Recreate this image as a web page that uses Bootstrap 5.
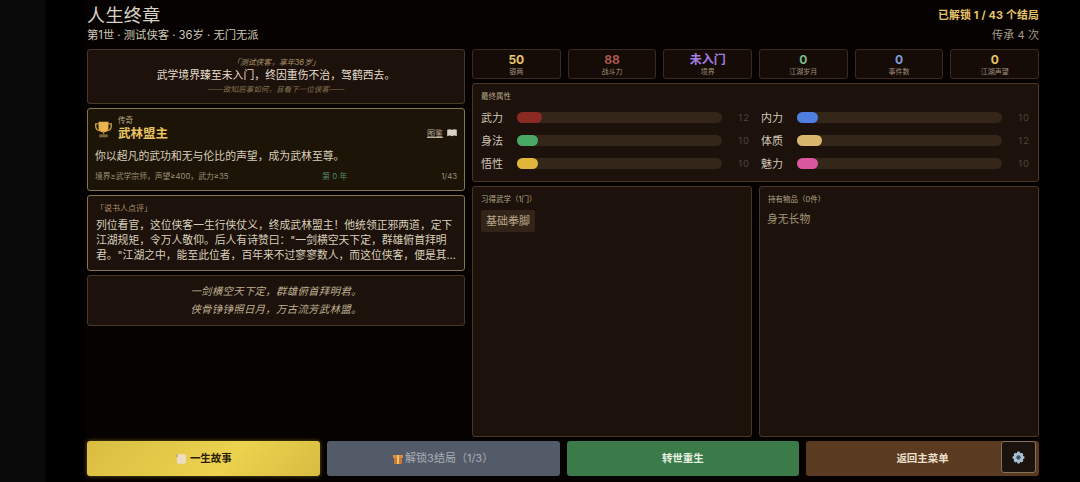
<!DOCTYPE html>
<html lang="zh-CN">
<head>
  <meta charset="UTF-8">
  <title>人生终章</title>
  <link href="https://cdn.jsdelivr.net/npm/bootstrap@5.3.3/dist/css/bootstrap.min.css" rel="stylesheet">
  <meta name="viewport" content="width=device-width, initial-scale=1">
<style>
  html, body { height: 482px; overflow: hidden; }
  body { background: #000; color: #e8dcc4; font-family: "Inter", "Noto Sans CJK SC", sans-serif; font-size: 11px; }
  .shell { height: 482px; background: linear-gradient(90deg, #0a0a0a 0, #0a0a0a 45px, #000 46px, #000 82px, #060201 87px, #060201 1038px, #000 1042px); padding: 0 41px 6px 87px; }
  .top-bar { height: 45px; }
  .page-title { font-size: 18px; line-height: 22px; font-weight: 400; color: #d8d2c6; margin: 5px 0 0; letter-spacing: .4px; }
  .page-sub { font-size: 11.3px; line-height: 16px; color: #cfc7b6; margin-top: 0; }
  .unlock-txt { font-size: 10.8px; line-height: 14px; font-weight: 700; color: #e8c56a; margin-top: 9px; letter-spacing: .2px; }
  .legacy-txt { font-size: 11px; line-height: 14px; color: #a59c8a; margin-top: 5px; letter-spacing: .1px; }
  .main-area { height: 388px; margin-top: 4px; gap: 7px; }
  .left-col { width: 378px; gap: 4px; }
  .right-col { width: 567px; gap: 4px; }
  .pane { background: #1c110b; border: 1px solid #4a3826; border-radius: 3px; }
  .death-pane { height: 55px; padding-top: 6px; text-align: center; }
  .death-top { font-size: 7.8px; line-height: 13px; font-style: italic; color: #a8926a; }
  .death-main { font-size: 10.8px; line-height: 14px; color: #e4dccb; letter-spacing: .05px; }
  .death-foot { font-size: 7.6px; line-height: 13px; font-style: italic; color: #85714f; }
  .ending-pane { height: 83px; background: #1d1408; border-color: #85754e; padding: 7px 7px 0; }
  .rank-txt { font-size: 7.5px; line-height: 10px; color: #b8a888; }
  .ending-name { font-size: 12.5px; line-height: 16px; font-weight: 700; color: #e8c560; letter-spacing: 0; }
  .atlas-link { font-size: 8px; color: #b9ae97; text-decoration: underline; margin-top: 7px; }
  .trophy-wrap { gap: 6px; }
  .ending-desc { font-size: 10.85px; line-height: 16px; color: #d8cfba; margin-top: 6px; }
  .ending-foot { font-size: 7.8px; line-height: 11px; color: #9c8f76; margin-top: 7px; }
  .year-txt { color: #4f8a62; }
  .review-pane { height: 76px; border-color: #85754e; padding: 6px 8px 0; }
  .review-head { font-size: 8px; line-height: 12px; color: #a8926a; }
  .review-body { font-size: 10.8px; line-height: 15px; color: #d8cfba; margin-top: 4px; height: 46px; overflow: hidden; }
  .poem-pane { height: 51px; text-align: center; font-style: italic; font-size: 10.5px; line-height: 18px; color: #bdae90; padding-top: 7px; letter-spacing: .2px; }
  .stat-row { gap: 7px; height: 30px; }
  .stat-box { flex: 1 1 0; background: #150c07; border: 1px solid #3a2b1e; border-radius: 3px; text-align: center; padding-top: 3px; }
  .stat-num { font-size: 12px; line-height: 14px; font-weight: 700; }
  .stat-lbl { font-size: 7px; line-height: 9px; color: #a09078; }
  .attr-pane { height: 99px; padding: 8px 8px 0; }
  .sec-label { font-size: 7.5px; line-height: 10px; color: #b5a789; }
  .attr-grid { margin-top: 8px; column-gap: 11px; display: grid; grid-template-columns: 1fr 1fr; row-gap: 7px; }
  .attr-item { height: 16px; }
  .attr-name { font-size: 11px; line-height: 16px; width: 36px; color: #cfc7b6; flex: none; }
  .attr-track { width: 205px; height: 11px; background: #35261a; border-radius: 6px; flex: none; }
  .attr-fill { height: 11px; border-radius: 6px; }
  .attr-val { font-size: 9.5px; width: 28px; text-align: right; color: #4e463c; letter-spacing: 1px; flex: none; }
  .lower-row { gap: 7px; height: 252px; }
  .skills-pane { width: 280px; padding: 8px 8px; }
  .items-pane { width: 280px; padding: 8px 8px; }
  .skill-chip { display: inline-block; font-size: 11px; line-height: 14px; color: #b8a888; background: #33241a; border-radius: 2px; padding: 4px 5px; margin-top: 5px; }
  .empty-txt { font-size: 10.8px; line-height: 15px; color: #a39679; margin-top: 7px; margin-left: -1px; }
  .action-row { gap: 7px; height: 35px; margin-top: 4px; }
  .act-btn { flex: 1 1 0; border: 0; border-radius: 3px; font-size: 10.5px; font-weight: 700; display: flex; align-items: center; justify-content: center; gap: 2px; padding: 0; }
  .act-gold { background: linear-gradient(135deg, #d9bd42, #ecd24e 60%, #d8bb42); color: #2a1c08; box-shadow: 0 0 4px #6a5a1c; }
  .act-grey { background: #535b68; color: #a9adb3; font-weight: 400; font-size: 11px; }
  .act-green { background: #3b7a49; color: #e6f0e0; }
  .act-brown { background: #5a3a20; color: #eadfca; }
  .gear-btn { width: 35px; height: 32px; top: 0; right: 3px; background: #1a120c; border: 1px solid #84735a; border-radius: 3px; }
</style>
</head>
<body>
  <div class="shell d-flex flex-column">
    <div class="top-bar d-flex justify-content-between">
      <div>
        <h1 class="page-title">人生终章</h1>
        <div class="page-sub">第1世 · 测试侠客 · 36岁 · 无门无派</div>
      </div>
      <div class="text-end">
        <div class="unlock-txt">已解锁 1 / 43 个结局</div>
        <div class="legacy-txt">传承 4 次</div>
      </div>
    </div>

    <div class="main-area d-flex">
      <div class="left-col d-flex flex-column">
        <div class="pane death-pane">
          <div class="death-top">「测试侠客，享年36岁」</div>
          <div class="death-main">武学境界臻至未入门，终因重伤不治，驾鹤西去。</div>
          <div class="death-foot">——欲知后事如何，且看下一位侠客——</div>
        </div>

        <div class="pane ending-pane">
          <div class="d-flex justify-content-between">
            <div class="d-flex align-items-center trophy-wrap">
              <svg width="17" height="17" viewBox="0 0 24 24">
                <path d="M5 4H1v3c0 3 2 6 6 7M19 4h4v3c0 3-2 6-6 7" fill="none" stroke="#c9973a" stroke-width="2"/>
                <path d="M5 1h14v8c0 4-3 7-7 7s-7-3-7-7z" fill="#e6b54e"/>
                <path d="M11 15h2v4h-2z" fill="#a9782c"/>
                <path d="M6 19h12v4H6z" fill="#7a6544"/>
              </svg>
              <div>
                <div class="rank-txt">传奇</div>
                <div class="ending-name">武林盟主</div>
              </div>
            </div>
            <div class="atlas-link d-flex align-items-center gap-1">图鉴
              <svg width="10" height="8" viewBox="0 0 12 10"><path d="M0 1c2-1 4-1 6 0 2-1 4-1 6 0v8c-2-1-4-1-6 0-2-1-4-1-6 0z" fill="#d6d2c8"/></svg>
            </div>
          </div>
          <div class="ending-desc">你以超凡的武功和无与伦比的声望，成为武林至尊。</div>
          <div class="ending-foot d-flex justify-content-between">
            <span>境界≥武学宗师，声望≥400，武力≥35</span>
            <span class="year-txt">第 0 年</span>
            <span>1/43</span>
          </div>
        </div>

        <div class="pane review-pane">
          <div class="review-head">「说书人点评」</div>
          <div class="review-body">列位看官，这位侠客一生行侠仗义，终成武林盟主！他统领正邪两道，定下江湖规矩，令万人敬仰。后人有诗赞曰："一剑横空天下定，群雄俯首拜明君。"江湖之中，能至此位者，百年来不过寥寥数人，而这位侠客，便是其…</div>
        </div>

        <div class="pane poem-pane">
          <div>一剑横空天下定，群雄俯首拜明君。</div>
          <div>侠骨铮铮照日月，万古流芳武林盟。</div>
        </div>
      </div>

      <div class="right-col d-flex flex-column">
        <div class="stat-row d-flex">
          <div class="stat-box"><div class="stat-num" style="color:#e8c56a">50</div><div class="stat-lbl">银两</div></div>
          <div class="stat-box"><div class="stat-num" style="color:#a8564c">88</div><div class="stat-lbl">战斗力</div></div>
          <div class="stat-box"><div class="stat-num" style="color:#a77de0">未入门</div><div class="stat-lbl">境界</div></div>
          <div class="stat-box"><div class="stat-num" style="color:#7fb98a">0</div><div class="stat-lbl">江湖岁月</div></div>
          <div class="stat-box"><div class="stat-num" style="color:#7f9fd8">0</div><div class="stat-lbl">事件数</div></div>
          <div class="stat-box"><div class="stat-num" style="color:#e8c56a">0</div><div class="stat-lbl">江湖声望</div></div>
        </div>

        <div class="pane attr-pane">
          <div class="sec-label">最终属性</div>
          <div class="attr-grid">
            <div class="attr-item d-flex align-items-center"><span class="attr-name">武力</span><div class="attr-track"><div class="attr-fill" style="width:25px;background:#8a2a22"></div></div><span class="attr-val">12</span></div>
            <div class="attr-item d-flex align-items-center"><span class="attr-name">内力</span><div class="attr-track"><div class="attr-fill" style="width:21px;background:#4f7fe0"></div></div><span class="attr-val">10</span></div>
            <div class="attr-item d-flex align-items-center"><span class="attr-name">身法</span><div class="attr-track"><div class="attr-fill" style="width:21px;background:#4aa866"></div></div><span class="attr-val">10</span></div>
            <div class="attr-item d-flex align-items-center"><span class="attr-name">体质</span><div class="attr-track"><div class="attr-fill" style="width:25px;background:#d9b76c"></div></div><span class="attr-val">12</span></div>
            <div class="attr-item d-flex align-items-center"><span class="attr-name">悟性</span><div class="attr-track"><div class="attr-fill" style="width:21px;background:#e0b53c"></div></div><span class="attr-val">10</span></div>
            <div class="attr-item d-flex align-items-center"><span class="attr-name">魅力</span><div class="attr-track"><div class="attr-fill" style="width:21px;background:#d9579c"></div></div><span class="attr-val">10</span></div>
          </div>
        </div>

        <div class="lower-row d-flex">
          <div class="pane skills-pane">
            <div class="sec-label">习得武学（1门）</div>
            <span class="skill-chip">基础拳脚</span>
          </div>
          <div class="pane items-pane">
            <div class="sec-label">持有物品（0件）</div>
            <div class="empty-txt">身无长物</div>
          </div>
        </div>
      </div>
    </div>

    <div class="action-row d-flex">
      <button class="act-btn act-gold" type="button">
        <svg width="13" height="12" viewBox="0 0 14 12"><path d="M2 1h8c1 0 2 1 2 2v6c0 1-1 2-2 2H4c-1 0-2-1-2-2z" fill="#ecdcc0"/><path d="M1 1h2v3H1z" fill="#c9a878"/></svg>
        一生故事
      </button>
      <button class="act-btn act-grey" type="button">
        <svg width="10" height="11" viewBox="0 0 10 11"><path d="M1 4h8v7H1z" fill="#c9763a"/><path d="M0 2h10v3H0z" fill="#d98a42"/><path d="M4 2h2v9H4z" fill="#e8c86a"/></svg>
        解锁3结局（1/3）
      </button>
      <button class="act-btn act-green" type="button">转世重生</button>
      <div class="position-relative d-flex" style="flex:1 1 0">
        <button class="act-btn act-brown" type="button">返回主菜单</button>
        <button class="gear-btn position-absolute d-flex align-items-center justify-content-center p-0" type="button" aria-label="设置">
          <svg width="13" height="13" viewBox="0 0 24 24"><path d="M10 1h4l1 3 3-1 3 3-1 3 3 1v4l-3 1 1 3-3 3-3-1-1 3h-4l-1-3-3 1-3-3 1-3-3-1v-4l3-1-1-3 3-3 3 1z" fill="#a9bfd0"/><circle cx="12" cy="12" r="4" fill="#3d5468"/></svg>
        </button>
      </div>
    </div>
  </div>
  <script src="https://cdn.jsdelivr.net/npm/bootstrap@5.3.3/dist/js/bootstrap.bundle.min.js"></script>
</body>
</html>
